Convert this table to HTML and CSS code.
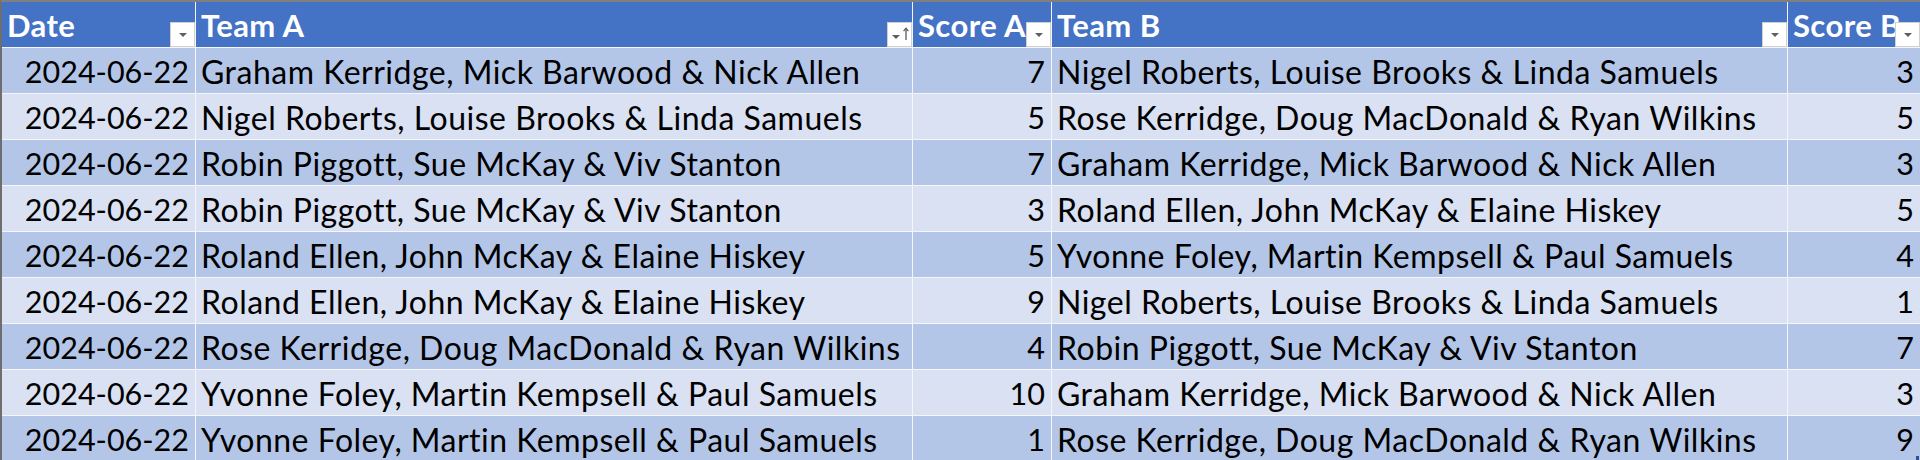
FILE: index.html
```html
<!DOCTYPE html>
<html lang="en">
<head>
<meta charset="utf-8">
<title>Results</title>
<link rel="stylesheet" href="styles.css">
</head>
<body>
<div class="sheet">
  <div class="row head">
    <div class="cell">Date<span class="filter"><span class="tri"></span></span></div>
    <div class="cell">Team A<span class="filter sorted"><span class="tri small"></span><svg class="arrow" width="6" height="13" viewBox="0 0 6 13"><path d="M3 1.5V13" stroke="#595959" stroke-width="1.3" fill="none"/><path d="M0.6 4.2L3 1.2L5.4 4.2" stroke="#595959" stroke-width="1.2" fill="none"/></svg></span></div>
    <div class="cell">Score A<span class="filter"><span class="tri"></span></span></div>
    <div class="cell selected">Team B<span class="filter"><span class="tri"></span></span></div>
    <div class="cell">Score B<span class="filter"><span class="tri"></span></span></div>
  </div>
  <div class="row dark"><div class="cell num">2024-06-22</div><div class="cell">Graham Kerridge, Mick Barwood &amp; Nick Allen</div><div class="cell num">7</div><div class="cell">Nigel Roberts, Louise Brooks &amp; Linda Samuels</div><div class="cell num">3</div></div>
  <div class="row light"><div class="cell num">2024-06-22</div><div class="cell">Nigel Roberts, Louise Brooks &amp; Linda Samuels</div><div class="cell num">5</div><div class="cell">Rose Kerridge, Doug MacDonald &amp; Ryan Wilkins</div><div class="cell num">5</div></div>
  <div class="row dark"><div class="cell num">2024-06-22</div><div class="cell">Robin Piggott, Sue McKay &amp; Viv Stanton</div><div class="cell num">7</div><div class="cell">Graham Kerridge, Mick Barwood &amp; Nick Allen</div><div class="cell num">3</div></div>
  <div class="row light"><div class="cell num">2024-06-22</div><div class="cell">Robin Piggott, Sue McKay &amp; Viv Stanton</div><div class="cell num">3</div><div class="cell">Roland Ellen, John McKay &amp; Elaine Hiskey</div><div class="cell num">5</div></div>
  <div class="row dark"><div class="cell num">2024-06-22</div><div class="cell">Roland Ellen, John McKay &amp; Elaine Hiskey</div><div class="cell num">5</div><div class="cell">Yvonne Foley, Martin Kempsell &amp; Paul Samuels</div><div class="cell num">4</div></div>
  <div class="row light"><div class="cell num">2024-06-22</div><div class="cell">Roland Ellen, John McKay &amp; Elaine Hiskey</div><div class="cell num">9</div><div class="cell">Nigel Roberts, Louise Brooks &amp; Linda Samuels</div><div class="cell num">1</div></div>
  <div class="row dark"><div class="cell num">2024-06-22</div><div class="cell">Rose Kerridge, Doug MacDonald &amp; Ryan Wilkins</div><div class="cell num">4</div><div class="cell">Robin Piggott, Sue McKay &amp; Viv Stanton</div><div class="cell num">7</div></div>
  <div class="row light"><div class="cell num">2024-06-22</div><div class="cell">Yvonne Foley, Martin Kempsell &amp; Paul Samuels</div><div class="cell num">10</div><div class="cell">Graham Kerridge, Mick Barwood &amp; Nick Allen</div><div class="cell num">3</div></div>
  <div class="row dark last"><div class="cell num">2024-06-22</div><div class="cell">Yvonne Foley, Martin Kempsell &amp; Paul Samuels</div><div class="cell num">1</div><div class="cell">Rose Kerridge, Doug MacDonald &amp; Ryan Wilkins</div><div class="cell num">9<span class="handle"></span></div></div>
</div>
</body>
</html>
```

FILE: styles.css
```css
html, body {
  margin: 0;
  padding: 0;
  background: #ffffff;
}

body {
  width: 1920px;
  height: 460px;
  overflow: hidden;
  font-family: Lato, "Open Sans", sans-serif;
}

.sheet {
  display: flex;
  flex-direction: column;
  row-gap: 1px;
  border-left: 2px solid #6e6e6e;
  border-top: 2px solid #7f7f7f;
  background: #f4f6fb;
  height: 458px;
  overflow: hidden;
}

.row {
  display: grid;
  grid-template-columns: 193px 716px 138px 735px 1fr;
  column-gap: 1px;
  height: 45px;
  flex: none;
}

.cell {
  position: relative;
  display: flex;
  align-items: flex-end;
  padding: 0 6px 6px 5px;
  font-size: 32px;
  letter-spacing: 0.5px;
  line-height: 31px;
  color: #000;
  white-space: nowrap;
  overflow: hidden;
}

.cell.num {
  justify-content: flex-end;
  font-size: 30.5px;
  letter-spacing: 0;
}

.dark .cell { background: #b4c6e7; }
.light .cell { background: #d9e1f2; }

.head .cell {
  background: #4472c4;
  color: #ffffff;
  font-weight: 700;
  font-size: 31px;
  letter-spacing: 0.4px;
  overflow: visible;
}

.head .cell.selected::before {
  content: "";
  position: absolute;
  left: -1px;
  right: -1px;
  top: -2px;
  height: 2px;
  background: #217346;
}

.filter {
  position: absolute;
  right: 0;
  bottom: 0;
  width: 25px;
  height: 25px;
  box-sizing: border-box;
  background: #ffffff;
  border: 1px solid #d0d0d0;
  display: flex;
  align-items: center;
  justify-content: center;
}

.tri {
  width: 0;
  height: 0;
  border-left: 4px solid transparent;
  border-right: 4px solid transparent;
  border-top: 4px solid #5f5f5f;
}

.filter.sorted {
  align-items: flex-end;
  justify-content: flex-start;
  padding: 0 0 6px 4px;
  gap: 3px;
}

.tri.small {
  margin-bottom: 1px;
}

.arrow {
  display: block;
}

.handle {
  position: absolute;
  right: 1px;
  bottom: 1px;
  width: 3px;
  height: 4px;
  background: #2f4f9a;
}
```
